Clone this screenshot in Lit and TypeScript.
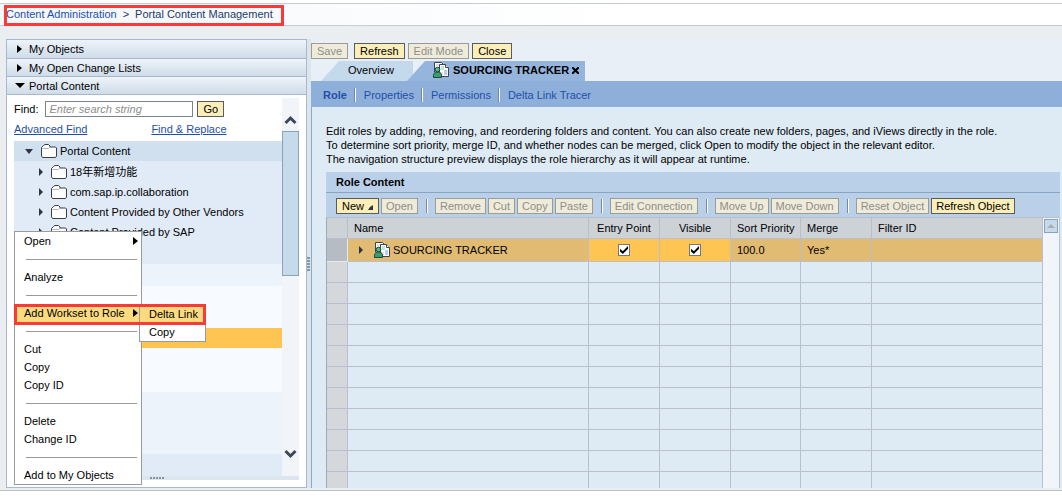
import { LitElement, html, css, svg, nothing } from "lit";
import { customElement, state } from "lit/decorators.js";
import { classMap } from "lit/directives/class-map.js";

const folderIcon = html`<svg class="folder" width="16" height="14" viewBox="0 0 16 14" aria-hidden="true">
  <path d="M.5 12V3.500L2.500 1.500L4 .5h3.500l1.500 1.500v1h5.500l1 1V12l-1 1.500h-13z" fill="#fff" stroke="#3a3d4a" />
  <path d="M1.500 4.500h6L9 3" fill="none" stroke="#b9b4ad" />
</svg>`;

const roleIcon = html`<svg class="role" width="17" height="16" viewBox="0 0 17 16" aria-hidden="true">
  <path d="M1.500 10V.5h7l2 2" fill="#fff" stroke="#3c4258" />
  <path d="M6.500 2.500h6l3 3v9h-9z" fill="#fff" stroke="#3c4258" />
  <path d="M12.500 2.500v3h3" fill="#fff" stroke="#3c4258" />
  <path d="M3 2h3v2H3z" fill="#f5d9cf" />
  <path d="M8 4h3v4H8z" fill="#b8ecd2" />
  <path d="M11 8h3v5h-3z" fill="#b9cdf7" />
  <path d="M7 10h3v3H7z" fill="#f5d9cf" />
  <path d="M.5 15.500v-3L2.500 10h4L8.500 12.500v3z" fill="#3d9b72" stroke="#1e4a3b" />
  <circle cx="4.500" cy="7.500" r="2.300" fill="#52b98a" stroke="#1e4a3b" />
</svg>`;

const chevron = (d: string) => html`<svg width="13" height="10" viewBox="0 0 13 10" aria-hidden="true">
  ${svg`<path d=${d} fill="none" stroke="#3c4858" stroke-width="3" />`}
</svg>`;

const menuItems: Array<{ label: string; sub?: boolean; on?: boolean } | null> = [
  { label: "Open", sub: true },
  null,
  { label: "Analyze" },
  null,
  { label: "Add Workset to Role", sub: true, on: true },
  null,
  { label: "Cut" },
  { label: "Copy" },
  { label: "Copy ID" },
  null,
  { label: "Delete" },
  { label: "Change ID" },
  null,
  { label: "Add to My Objects" },
];

const toolGroups: Array<Array<{ label: string; on?: boolean; menu?: boolean }>> = [
  [{ label: "New", on: true, menu: true }, { label: "Open" }],
  [{ label: "Remove" }, { label: "Cut" }, { label: "Copy" }, { label: "Paste" }],
  [{ label: "Edit Connection" }],
  [{ label: "Move Up" }, { label: "Move Down" }],
  [{ label: "Reset Object" }, { label: "Refresh Object", on: true }],
];

const shared = css`
  * { box-sizing: border-box; }
  button, input { font: inherit; color: inherit; margin: 0; }
  button { padding: 0; border: 0; background: none; text-align: left; white-space: nowrap; }
  .btn {
    height: 16px; padding: 0 5px; border: 1px solid #5b5b5b; background: #fbeeb8;
    color: #000; line-height: 14px; text-align: center;
  }
  .btn:disabled { border-color: #9d9c92; background: #eeebda; color: #8e8e88; }
  .right { width: 0; height: 0; border: 4px solid transparent; border-left: 5px solid #000; border-right: 0; flex: none; }
  .down { width: 0; height: 0; border: 4px solid transparent; border-top: 5px solid #000; border-bottom: 0; flex: none; }
  .navy.right { border-left-color: #2e3348; border-left-width: 4px; }
  .navy.down { border-top-color: #2e3348; }
  svg { display: block; flex: none; }
`;

@customElement("context-menu")
class ContextMenu extends LitElement {
  static styles = [shared, css`
    :host { display: block; width: 128px; }
    .menu { border: 1px solid #9a9a9a; background: #fff; }
    .item { display: flex; align-items: center; justify-content: space-between; width: 100%; height: 18px; padding: 0 3px 0 9px; }
    .on { background: #fcdb80; }
    .sep { height: 18px; display: flex; align-items: center; padding: 0 4px 0 11px; }
    .sep hr { flex: 1; margin: 0; border: 0; height: 1px; background: #999; }
    .submenu { position: absolute; left: 125px; top: 73px; width: 67px; }
    .mark { position: absolute; left: 0; top: 73px; width: 192px; height: 21px; border: 3px solid #fb3939; pointer-events: none; }
  `];
  render() {
    return html`
      <div class="menu" role="menu">
        ${menuItems.map((m) => m
          ? html`<button class=${classMap({ item: true, on: !!m.on })} role="menuitem">${m.label}${m.sub ? html`<span class="right"></span>` : nothing}</button>`
          : html`<div class="sep"><hr /></div>`)}
      </div>
      <div class="menu submenu" role="menu">
        <button class="item on" role="menuitem">Delta Link</button>
        <button class="item" role="menuitem">Copy</button>
      </div>
      <div class="mark"></div>
    `;
  }
}

@customElement("content-tree")
class ContentTree extends LitElement {
  static styles = [shared, css`
    :host { display: flex; flex-direction: column; min-height: 0; position: relative; border: 1px solid #a9b8d0; background: #fff; }
    .head { display: flex; align-items: center; gap: 5px; height: 18px; padding-left: 9px; border-bottom: 1px solid #a9b8cc; background: linear-gradient(#eef4f9, #cfdce9); flex: none; }
    .head.tall { height: 19px; }
    .head .right { margin: 0 2px 0 1px; }
    .head .down { border-left-width: 5px; border-right-width: 5px; margin: 0 -1px 0 -1px; }
    .body { display: flex; flex: 1; min-height: 0; padding: 3px 7px 7px 7px; }
    .col { flex: 1; min-width: 0; display: flex; flex-direction: column; }
    .find { display: flex; align-items: center; gap: 4px; height: 20px; padding-top: 1px; }
    .find input { width: 148px; height: 16px; margin-left: 3px; padding: 0 3px; border: 1px solid #7c858c; border-radius: 0; background: #fff; outline: 0; }
    .find input::placeholder { color: #8d8d8d; font-style: italic; opacity: 1; }
    .links { display: flex; gap: 64px; height: 23px; padding-top: 4px; white-space: nowrap; }
    a { color: #1f4fa8; }
    .tree { flex: 1; min-height: 0; overflow: hidden; background: #e1ebf7; }
    .row { display: flex; align-items: center; gap: 8px; height: 20px; padding-left: 25px; white-space: nowrap; }
    .row.root { background: #d0e0ef; padding-left: 11px; }
    .row.cjk { height: 21px; }
    .row svg + span { margin-left: -5px; }
    .blank { height: 22px; }
    .pale { height: 22px; background: #ecf3fb; }
    .light { height: 42px; background: #f7fbff; }
    .picked { height: 20px; background: #ffc552; }
    .light.b { height: 44px; }
    .pale.b { height: 62px; }
    .scroll { width: 17px; display: flex; flex-direction: column; justify-content: space-between; align-items: center; background: #f1f5f9; }
    .scroll svg { margin: 17px 0 21px; }
    .scroll svg:first-child { margin-bottom: 6px; }
    .thumb { width: 17px; height: 145px; border: 1px solid #8ba3b6; background: #c5daea; margin-bottom: auto; flex: none; }
    .bar { height: 4px; background: #dde6ee; margin-right: -17px; padding-left: 136px; display: flex; align-items: center; flex: none; z-index: 1; }
    .grip { width: 14px; height: 2px; background: repeating-linear-gradient(90deg, #8496a4 0 2px, transparent 2px 3px); }
    context-menu { position: absolute; z-index: 2; left: 7px; top: 191px; }
  `];
  render() {
    const rows = ["18年新增功能", "com.sap.ip.collaboration", "Content Provided by Other Vendors", "Content Provided by SAP"];
    return html`
      <button class="head tall"><span class="right"></span>My Objects</button>
      <button class="head"><span class="right"></span>My Open Change Lists</button>
      <button class="head"><span class="down"></span>Portal Content</button>
      <div class="body">
        <div class="col">
          <div class="find">
            <label for="find">Find:</label>
            <input id="find" type="text" placeholder="Enter search string" />
            <button class="btn">Go</button>
          </div>
          <div class="links"><a href="#advanced">Advanced Find</a><a href="#replace">Find &amp; Replace</a></div>
          <div class="tree">
            <div class="row root"><span class="down navy"></span>${folderIcon}<span>Portal Content</span></div>
            ${rows.map((r, i) => html`<div class=${classMap({ row: true, cjk: i === 0 })}><span class="right navy"></span>${folderIcon}<span>${r}</span></div>`)}
            <div class="blank"></div>
            <div class="pale"></div>
            <div class="light"></div>
            <div class="picked"></div>
            <div class="light b"></div>
            <div class="pale b"></div>
          </div>
          <div class="bar"><span class="grip"></span></div>
        </div>
        <div class="scroll">
          ${chevron("M1.500 8L6.500 3L11.500 8")}
          <div class="thumb"></div>
          ${chevron("M1.500 2L6.500 7L11.500 2")}
        </div>
      </div>
      <context-menu></context-menu>
    `;
  }
}

@customElement("role-table")
class RoleTable extends LitElement {
  static styles = [shared, css`
    :host { display: flex; flex-direction: column; flex: 1; min-height: 0; }
    h2 { margin: 0; height: 21px; padding-left: 10px; border-bottom: 1px solid #87a6c4; background: #b9d0e8; font-size: 11px; line-height: 20px; flex: none; }
    .tools { display: flex; align-items: center; height: 24px; padding: 1px 0 0 10px; background: #b9d0e8; flex: none; }
    .group { display: flex; gap: 2px; }
    .group + .group::before { content: ""; width: 2px; height: 14px; margin: 1px 5px 0 8px; background: linear-gradient(90deg, #7089a8 50%, #fff 50%); }
    .btn { padding: 0 4px; }
    .btn.drop { padding: 0 5px; }
    .corner { display: inline-block; margin-left: 4px; border: 3px solid transparent; border-right-color: #2e3348; border-bottom-color: #2e3348; border-top-width: 2px; border-left-width: 2px; }
    .grid { display: flex; flex: 1; min-height: 0; overflow: hidden; border-top: 1px solid #b9bfcd; border-left: 1px solid #9caab8; border-right: 1px solid #b4c4d0; }
    .wrap { flex: 1; min-width: 0; overflow: hidden; }
    table { width: 100%; table-layout: fixed; border-collapse: separate; border-spacing: 0; }
    th, td { height: 21px; padding: 0 6px; border-right: 1px solid #b9bfcd; border-bottom: 1px solid #b9bfcd; text-align: left; font-weight: normal; white-space: nowrap; }
    thead th { background: #cdd2d7; }
    .c0 { width: 21px; } .c1 { width: 241px; } .c2 { width: 71px; } .c4 { width: 70px; }
    .mid { text-align: center; }
    tbody td:first-child { background: #d4d7dc; }
    .sel td { height: 23px; background: #e1bb71; }
    .sel td:first-child { background: #b5bcc4; border-color: #e7eaed; }
    .sel td.mid { background: #ffc552; }
    .name { display: flex; align-items: center; gap: 2px; padding-left: 5px; }
    .name .role { margin-left: 9px; }
    input { appearance: none; display: block; width: 12px; height: 12px; margin: 0 auto; border: 1px solid #777; background: #fff; }
    input:checked::before { content: ""; display: block; width: 8px; height: 8px; margin: 1px; background: #000; clip-path: polygon(0 35%, 35% 65%, 100% 0, 100% 35%, 35% 100%, 0 70%); }
    .scroll { width: 16px; padding: 1px; background: #f1f5f9; flex: none; }
    .up { display: flex; align-items: center; justify-content: center; width: 14px; height: 14px; border: 1px solid #8ba3b6; background: #c5daea; }
    .up span { border: 4px solid transparent; border-top: 0; border-bottom-color: #b0aeb0; }
  `];
  @state() private entry = true;
  @state() private visible = true;
  render() {
    return html`
      <h2>Role Content</h2>
      <div class="tools">
        ${toolGroups.map((g) => html`<div class="group">${g.map((b) => html`<button class=${classMap({ btn: true, drop: !!b.menu })} ?disabled=${!b.on}>${b.label}${b.menu ? html`<span class="corner"></span>` : nothing}</button>`)}</div>`)}
      </div>
      <div class="grid">
        <div class="wrap">
          <table>
            <colgroup><col class="c0" /><col class="c1" /><col class="c2" /><col class="c2" /><col class="c4" /><col class="c2" /><col /></colgroup>
            <thead><tr><th></th><th>Name</th><th class="mid">Entry Point</th><th class="mid">Visible</th><th>Sort Priority</th><th>Merge</th><th>Filter ID</th></tr></thead>
            <tbody>
              <tr class="sel">
                <td></td>
                <td><div class="name"><span class="right navy"></span>${roleIcon}<span>SOURCING TRACKER</span></div></td>
                <td class="mid"><input type="checkbox" aria-label="Entry Point" .checked=${this.entry} @change=${() => (this.entry = !this.entry)} /></td>
                <td class="mid"><input type="checkbox" aria-label="Visible" .checked=${this.visible} @change=${() => (this.visible = !this.visible)} /></td>
                <td>100.0</td><td>Yes*</td><td></td>
              </tr>
              ${Array.from({ length: 11 }, () => html`<tr><td></td><td></td><td></td><td></td><td></td><td></td><td></td></tr>`)}
            </tbody>
          </table>
        </div>
        <div class="scroll"><button class="up" aria-label="Scroll up"><span></span></button></div>
      </div>
    `;
  }
}

@customElement("app-root")
class AppRoot extends LitElement {
  static styles = [shared, css`
    :host { box-sizing: border-box; display: flex; flex-direction: column; height: 100vh; overflow: hidden; padding: 3px 0 5px; background: #fff; color: #000; font: 11px/14px "Liberation Sans", "Noto Sans CJK SC", sans-serif; }
    nav.crumbs { position: relative; display: flex; align-items: center; gap: 6px; height: 23px; padding: 0 0 1px 6px; border: 1px solid #c5cad3; border-width: 1px 0; background: linear-gradient(90deg, #f4f8fb, #fff 60%); color: #223a6b; flex: none; }
    .crumbs a { color: #1f4fa8; text-decoration: none; }
    .mark { position: absolute; left: 4px; top: 1px; width: 280px; height: 21px; border: 3px solid #fb3939; pointer-events: none; }
    main { display: flex; flex: 1; min-height: 0; padding: 13px 0 2px 6px; background: #eaeef1; border-bottom: 1px solid #b4c0ca; }
    content-tree { width: 301px; flex: none; }
    .split { width: 4px; background: #dbe6ec; flex: none; display: flex; align-items: center; }
    .grip { width: 3px; height: 14px; background: repeating-linear-gradient(#8496a4 0 2px, transparent 2px 3px); }
    .work { flex: 1; min-width: 0; display: flex; flex-direction: column; background: #e9eff7; }
    .actions { display: flex; gap: 3px; height: 22px; padding-top: 4px; flex: none; }
    .actions .btn:first-child { margin-right: 3px; }
    .tabs { display: flex; height: 20px; padding-left: 10px; flex: none; }
    .tab { display: flex; align-items: center; height: 20px; background: #c5d9ec; clip-path: polygon(18px 0, 100% 0, 100% 100%, 0 100%); }
    .overview { width: 92px; padding-left: 27px; padding-bottom: 2px; }
    .active { margin-left: -6px; padding: 0 6px 2px 26px; gap: 3px; background: #95b5dc; font-weight: bold; }
    .sub { display: flex; align-items: center; height: 26px; padding: 2px 0 0 12px; background: #8eafd9; flex: none; }
    .sub a { color: #1f4fa8; text-decoration: none; padding: 0 8px; border-left: 1px solid #fff; box-shadow: -1px 0 #6c88b0; }
    .sub a:first-child { padding-left: 0; border: 0; box-shadow: none; font-weight: bold; }
    .content { display: flex; flex-direction: column; flex: 1; min-height: 0; padding: 17px 2px 0 14px; border-left: 1px solid #8ea9c2; background: #deebf5; }
    p { margin: 0 0 6px; }
  `];
  render() {
    return html`
      <nav class="crumbs" aria-label="Breadcrumb">
        <a href="#admin">Content Administration</a><span>&gt;</span><span>Portal Content Management</span>
        <div class="mark"></div>
      </nav>
      <main>
        <content-tree></content-tree>
        <div class="split"><span class="grip"></span></div>
        <section class="work">
          <div class="actions">
            <button class="btn" disabled>Save</button><button class="btn">Refresh</button><button class="btn" disabled>Edit Mode</button><button class="btn">Close</button>
          </div>
          <div class="tabs">
            <button class="tab overview">Overview</button>
            <button class="tab active">${roleIcon}<span>SOURCING TRACKER</span><svg width="7" height="7" viewBox="0 0 7 7" aria-hidden="true"><path d="M0 0L7 7M7 0L0 7" stroke="#000" stroke-width="2" /></svg></button>
          </div>
          <nav class="sub"><a href="#role">Role</a><a href="#properties">Properties</a><a href="#permissions">Permissions</a><a href="#tracer">Delta Link Tracer</a></nav>
          <div class="content">
            <p>Edit roles by adding, removing, and reordering folders and content. You can also create new folders, pages, and iViews directly in the role.<br />To determine sort priority, merge ID, and whether nodes can be merged, click Open to modify the object in the relevant editor.<br />The navigation structure preview displays the role hierarchy as it will appear at runtime.</p>
            <role-table></role-table>
          </div>
        </section>
      </main>
    `;
  }
}
